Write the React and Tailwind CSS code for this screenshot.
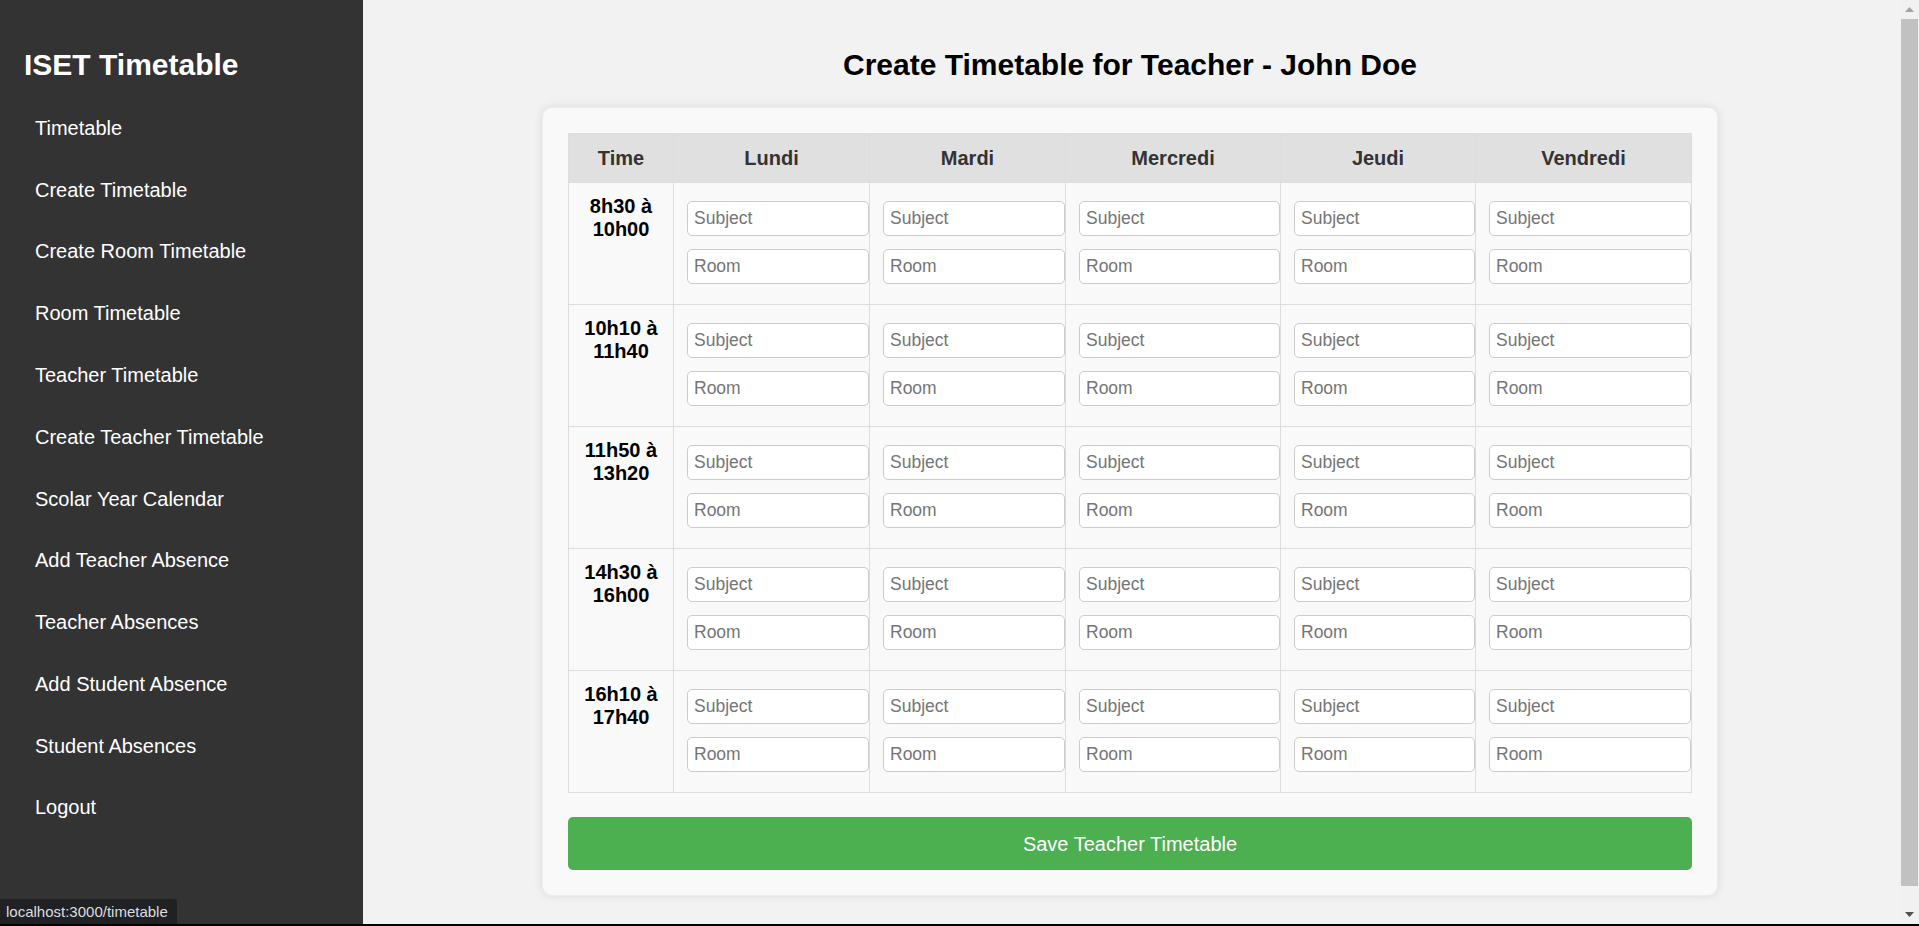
import { useState } from 'react'

const navItems = [
  'Timetable',
  'Create Timetable',
  'Create Room Timetable',
  'Room Timetable',
  'Teacher Timetable',
  'Create Teacher Timetable',
  'Scolar Year Calendar',
  'Add Teacher Absence',
  'Teacher Absences',
  'Add Student Absence',
  'Student Absences',
  'Logout',
]

const days = ['Lundi', 'Mardi', 'Mercredi', 'Jeudi', 'Vendredi']

const slots = [
  ['8h30 à', '10h00'],
  ['10h10 à', '11h40'],
  ['11h50 à', '13h20'],
  ['14h30 à', '16h00'],
  ['16h10 à', '17h40'],
]

function Sidebar() {
  return (
    <aside className="w-[363px] shrink-0 bg-[#333333] pt-[47px] text-white">
      <h2 className="pl-[24px] text-[30px] font-bold leading-[36px]">ISET Timetable</h2>
      <ul className="mt-[14px]">
        {navItems.map((item) => (
          <li key={item} className="py-[18.9px] pl-[35px] text-[20px] leading-[24px]">
            <a href="#" className="text-white">
              {item}
            </a>
          </li>
        ))}
      </ul>
    </aside>
  )
}

function Scrollbar() {
  return (
    <div className="flex w-[19px] shrink-0 flex-col bg-[#f1f1f1]">
      <div className="flex h-[19px] items-center justify-center">
        <svg width="9" height="5" viewBox="0 0 9 5">
          <polygon points="0,5 9,5 4.5,0" fill="#a3a3a3" />
        </svg>
      </div>
      <div className="mx-[1px] h-[867px] bg-[#c1c1c1]" />
      <div className="flex-1" />
      <div className="flex h-[19px] items-center justify-center">
        <svg width="9" height="5" viewBox="0 0 9 5">
          <polygon points="0,0 9,0 4.5,5" fill="#505050" />
        </svg>
      </div>
    </div>
  )
}

function TimetableGrid({ values, onChange }) {
  return (
    <div className="grid grid-cols-[104px_195px_195px_214px_194px_215px] gap-px border border-[#ddd] bg-[#ddd]">
      <div className="flex h-[48px] items-center justify-center bg-[#e0e0e0] text-[20px] font-bold leading-[23px] text-[#333]">
        Time
      </div>
      {days.map((d) => (
        <div
          key={d}
          className="flex h-[48px] items-center justify-center bg-[#e0e0e0] text-[20px] font-bold leading-[23px] text-[#333]"
        >
          {d}
        </div>
      ))}
      {slots.map((slot, si) => (
        <Row key={si} slot={slot} si={si} values={values} onChange={onChange} />
      ))}
    </div>
  )
}

function Row({ slot, si, values, onChange }) {
  return (
    <>
      <div className="h-[121px] bg-[#f9f9f9] pt-[12px] text-center text-[20px] font-bold leading-[23px] text-black">
        {slot[0]}
        <br />
        {slot[1]}
      </div>
      {days.map((d) => {
        const key = si + '-' + d
        const v = values[key] || { subject: '', room: '' }
        return (
          <div key={d} className="flex h-[121px] flex-col gap-[13px] bg-[#f9f9f9] pl-[13px] pt-[18px]">
            <input
              type="text"
              placeholder="Subject"
              value={v.subject}
              onChange={(e) => onChange(key, 'subject', e.target.value)}
              className="h-[35px] w-full rounded-[5px] border border-[#ccc] bg-white px-[6px] text-[17.5px] text-black outline-none placeholder:text-[#757575]"
            />
            <input
              type="text"
              placeholder="Room"
              value={v.room}
              onChange={(e) => onChange(key, 'room', e.target.value)}
              className="h-[35px] w-full rounded-[5px] border border-[#ccc] bg-white px-[6px] text-[17.5px] text-black outline-none placeholder:text-[#757575]"
            />
          </div>
        )
      })}
    </>
  )
}

export default function App() {
  const [values, setValues] = useState({})

  function handleChange(key, field, val) {
    setValues((prev) => ({
      ...prev,
      [key]: { ...(prev[key] || { subject: '', room: '' }), [field]: val },
    }))
  }

  return (
    <div className="flex h-[926px] flex-col overflow-hidden font-['Liberation_Sans',Arial,sans-serif]">
      <div className="flex min-h-0 flex-1">
        <Sidebar />
        <main className="min-w-0 flex-1 bg-[#f2f2f2] pr-[3px] pt-[47px]">
          <h1 className="text-center text-[30px] font-bold leading-[35px] text-black">
            Create Timetable for Teacher - John Doe
          </h1>
          <div className="mx-auto mt-[25px] w-[1176px] rounded-[10px] border border-[#ececec] bg-[#f9f9f9] p-[25px] shadow-[0_0_10px_rgba(0,0,0,0.1)]">
            <TimetableGrid values={values} onChange={handleChange} />
            <button
              type="button"
              className="mt-[24px] h-[53px] w-full rounded-[5px] bg-[#4caf50] text-[20px] text-white"
            >
              Save Teacher Timetable
            </button>
          </div>
        </main>
        <Scrollbar />
      </div>
      <div className="h-[2px] bg-black" />
      <div className="fixed bottom-[2px] left-0 h-[25px] w-[177px] rounded-tr-[4px] bg-[#202124] pl-[6px] text-[15px] leading-[25px] text-[#dddddd]">
        localhost:3000/timetable
      </div>
    </div>
  )
}
